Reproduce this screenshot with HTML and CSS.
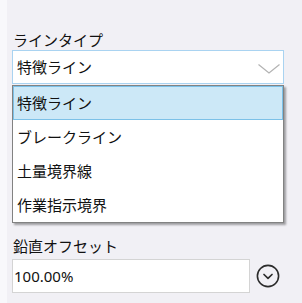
FILE: index.html
```html
<!DOCTYPE html>
<html lang="ja">
<head>
<meta charset="utf-8">
<link rel="stylesheet" href="styles.css">
</head>
<body>
<div class="page">
  <div class="field field-select">
    <div class="label">ラインタイプ</div>
    <div class="select">
      <span class="select-value">特徴ライン</span>
      <svg class="chevron" width="22" height="10" viewBox="0 0 22 10"><path d="M0.5 0.5 L11 9 L21.5 0.5" fill="none" stroke="#b3b3b3" stroke-width="1.2"/></svg>
    </div>
    <ul class="dropdown">
      <li class="item selected">特徴ライン</li>
      <li class="item">ブレークライン</li>
      <li class="item">土量境界線</li>
      <li class="item">作業指示境界</li>
    </ul>
  </div>
  <div class="field">
    <div class="label">鉛直オフセット</div>
    <div class="row">
      <div class="input">100.00%</div>
      <svg class="circle-btn" width="24" height="24" viewBox="0 0 24 24"><circle cx="12" cy="12" r="10.6" fill="none" stroke="#2b2b2b" stroke-width="1.6"/><path d="M8 10.5 L12 14.3 L16 10.5" fill="none" stroke="#2b2b2b" stroke-width="1.7" stroke-linecap="round" stroke-linejoin="round"/></svg>
    </div>
  </div>
</div>
</body>
</html>
```
FILE: styles.css
```css
html, body {
  margin: 0;
  padding: 0;
}
body {
  background: #f1f0f5;
  font-family: "Noto Sans CJK JP", "Noto Sans", sans-serif;
  color: #111;
  font-size: 15px;
}
.page {
  width: 302px;
  height: 303px;
  box-sizing: border-box;
  padding: 29px 0 0 12px;
  background: linear-gradient(to right, #f8f8fb 7px, #f1f0f5 7px);
}
.field-select {
  position: relative;
  margin-bottom: 151px;
}
.label {
  height: 21px;
  line-height: 21px;
  padding-left: 1px;
}
.select {
  width: 272px;
  height: 34px;
  box-sizing: border-box;
  border: 1px solid #a9d3f1;
  background: #fff;
  display: flex;
  align-items: center;
  justify-content: space-between;
  padding: 0 3px 0 4px;
}
.select-value {
  line-height: 20px;
}
.chevron {
  margin-top: 3px;
}
.dropdown {
  position: absolute;
  left: 0;
  top: 56px;
  width: 272px;
  box-sizing: border-box;
  margin: 0;
  padding: 0;
  list-style: none;
  background: #fff;
  border: 1px solid #828282;
  box-shadow: 2px 2px 2px rgba(0, 0, 0, 0.35);
}
.item {
  height: 34px;
  box-sizing: border-box;
  line-height: 32px;
  padding-left: 3px;
  border: 1px solid transparent;
}
.item.selected {
  background: #cce8f7;
  border-color: #7cc1e8;
}
.row {
  display: flex;
  align-items: center;
  margin-top: 3px;
}
.input {
  width: 238px;
  height: 34px;
  box-sizing: border-box;
  border: 1px solid #d4d4d4;
  background: #fff;
  line-height: 32px;
  padding-left: 1px;
  font-family: "Noto Sans", "Noto Sans CJK JP", sans-serif;
}
.circle-btn {
  margin-left: 6px;
  margin-top: 0;
}
```
